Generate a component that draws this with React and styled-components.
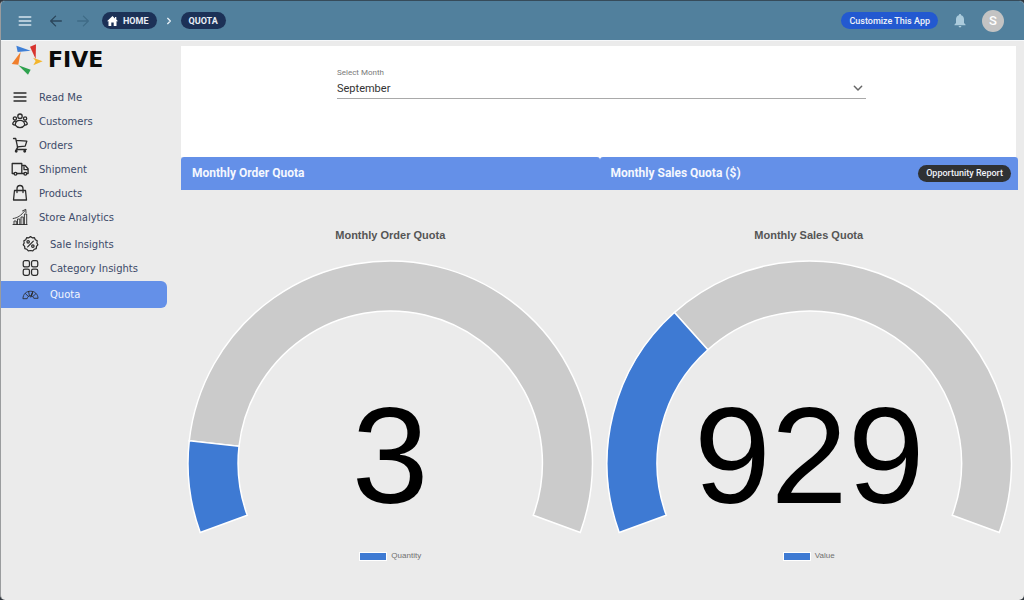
import React, { useState } from "react";
import styled, { createGlobalStyle } from "styled-components";

const GlobalStyle = createGlobalStyle`
  * {
    box-sizing: border-box;
  }

  body {
    margin: 0;
    background: #30363d;
    font-family: Roboto, "Liberation Sans", sans-serif;
  }

  button,
  select {
    font-family: inherit;
  }
`;

const Window = styled.div`
  display: flex;
  flex-direction: column;
  min-height: 100vh;
  border-top: 1px solid #364b5a;
  border-left: 1px solid #9a9c9e;
  border-radius: 5px;
  background: #ebebeb;
  overflow: hidden;
`;

const TopBar = styled.header`
  display: flex;
  align-items: center;
  height: 40px;
  padding: 0 20px 0 16px;
  border-bottom: 1px solid #f6f8fa;
  background: #51809d;
`;

const IconButton = styled.button`
  display: flex;
  padding: 0;
  border: none;
  background: none;
  color: ${(props) => props.$color};
  margin-right: ${(props) => props.$gap || 0}px;
  cursor: pointer;
`;

const Crumbs = styled.nav`
  display: flex;
  align-items: center;
  flex: 1;
  gap: 8px;
  color: #e6eef5;
`;

const Crumb = styled.a`
  display: flex;
  align-items: center;
  gap: 5px;
  height: 17px;
  padding: 0 8px 0 ${(props) => (props.$icon ? 5 : 8)}px;
  border-radius: 9px;
  background: #1c3157;
  color: #e9eef6;
  font-size: 9px;
  font-weight: 700;
  text-decoration: none;
`;

const PillButton = styled.button`
  height: 17px;
  padding: 0 8px;
  border: none;
  border-radius: 9px;
  background: ${(props) => props.$bg};
  color: #f0f3f8;
  font-size: 9px;
  font-weight: 500;
  white-space: nowrap;
  cursor: pointer;
`;

const Actions = styled.div`
  display: flex;
  align-items: center;
  gap: 15px;
`;

const Avatar = styled.button`
  width: 22px;
  height: 22px;
  padding: 0;
  border: none;
  border-radius: 50%;
  background: #c3c3c3;
  color: #fff;
  font-size: 13px;
  font-weight: 500;
`;

const Body = styled.div`
  display: flex;
  flex: 1;
`;

const Sidebar = styled.aside`
  flex: none;
  width: 180px;
  padding: 2px 14px 0 0;
`;

const Brand = styled.div`
  display: flex;
  align-items: center;
  gap: 5px;
  height: 32px;
  margin-bottom: 10px;
  padding-left: 10px;
  color: #0b0b0b;
  font-family: "DejaVu Sans", sans-serif;
  font-size: 22px;
  font-weight: 700;
`;

const MenuList = styled.ul`
  margin: 0;
  padding: ${(props) => (props.$nested ? "3px 0 0" : 0)};
  list-style: none;
`;

const MenuLink = styled.a`
  display: flex;
  align-items: center;
  gap: ${(props) => (props.$nested ? 11 : 10)}px;
  height: ${(props) => (props.$active ? 27 : 24)}px;
  margin-top: ${(props) => (props.$active ? 1 : 0)}px;
  padding-left: ${(props) => (props.$nested ? 21 : 10)}px;
  border-radius: 0 6px 6px 0;
  background: ${(props) => (props.$active ? "#6490e8" : "none")};
  color: ${(props) => (props.$active ? "#f3f6fd" : "#3c4a69")};
  font-family: "DejaVu Sans", sans-serif;
  font-size: 10px;
  text-decoration: none;

  svg {
    flex: none;
    width: ${(props) => (props.$nested ? 17 : 18)}px;
    height: 18px;
    color: #2b2b2b;
  }
`;

const Content = styled.main`
  flex: 1;
  min-width: 0;
  padding: 5px 6px 0 0;
`;

const FilterCard = styled.section`
  height: 111px;
  margin-right: 2px;
  padding: 22px 150px 0 156px;
  background: #fff;
`;

const FieldLabel = styled.label`
  display: block;
  color: #7a7a7a;
  font-size: 8px;
  line-height: 10px;
`;

const SelectBox = styled.div`
  display: grid;
  align-items: center;
  border-bottom: 1px solid #a9a9a9;

  select,
  svg {
    grid-area: 1 / 1;
  }

  svg {
    justify-self: end;
    margin-right: 2px;
    color: #666;
    pointer-events: none;
  }
`;

const Select = styled.select`
  width: 100%;
  height: 20px;
  padding: 0;
  border: none;
  appearance: none;
  background: none;
  color: #333;
  font-size: 11px;
  outline: none;
`;

const Columns = styled.div`
  display: grid;
  grid-template-columns: 1fr 1fr;
  border-radius: 3px 3px 0 0;
  background: ${(props) => props.$bg || "none"};
`;

const PanelHeader = styled.div`
  display: flex;
  align-items: center;
  justify-content: space-between;
  height: 33px;
  padding: 0 7px 1px 11px;
  border-radius: 3px 3px 0 0;
  background: #6490e8;
`;

const PanelTitle = styled.h2`
  margin: 0;
  color: #f4f7fe;
  font-size: 12px;
  font-weight: 700;
`;

const ChartPanel = styled.figure`
  display: flex;
  flex-direction: column;
  align-items: center;
  margin: 0;
  padding-top: 38px;
  font-family: "Liberation Sans", Arial, sans-serif;
`;

const ChartTitle = styled.figcaption`
  margin-bottom: 8px;
  color: #555;
  font-size: 11px;
  font-weight: 700;
  line-height: 14px;
`;

const Dial = styled.svg`
  display: block;
  width: 100%;
  height: auto;
`;

const Legend = styled.div`
  display: flex;
  align-items: center;
  gap: 4px;
  margin-top: 10px;
  color: #707070;
  font-size: 8px;
  line-height: 12px;
`;

const Swatch = styled.span`
  width: 28px;
  height: 9px;
  border: 1px solid #fff;
  background: #3e7ad3;
`;

const Svg = ({ size = 18, width = 1.3, children, ...rest }) => (
  <svg
    width={size}
    height={size}
    viewBox="0 0 18 18"
    fill="none"
    stroke="currentColor"
    strokeWidth={width}
    strokeLinecap="round"
    strokeLinejoin="round"
    aria-hidden="true"
    {...rest}
  >
    {children}
  </svg>
);

const LinesIcon = () => (
  <Svg>
    <path d="M3 5h12M3 9h12M3 13h12" />
  </Svg>
);

const CustomersIcon = () => (
  <Svg width={1.3}>
    <circle cx="9" cy="4.2" r="2.2" />
    <circle cx="3.9" cy="6.4" r="1.6" />
    <circle cx="14.1" cy="6.4" r="1.6" />
    <path d="M4.3 13.2C4.300 10.200 6.200 8.400 9 8.400s4.700 1.800 4.700 4.800c-1.100 1.700-2.700 2.400-4.700 2.400s-3.600-.7-4.700-2.400z" />
    <path d="M5.200 9.300C3.300 8.700 1.900 9.900 1.700 12c.6.700 1.400 1.100 2.500 1.100M12.800 9.300c1.900-.6 3.300.6 3.500 2.700-.6.7-1.400 1.100-2.500 1.100" />
  </Svg>
);

const CartIcon = () => (
  <Svg>
    <path d="M2.500 2.500h2.200l2 9.200M5.100 4.300l10.700.9-1.600 4.900-8 .8M6.700 11.700l-1.500 1.800h10" />
    <circle cx="5.200" cy="15.200" r=".8" fill="currentColor" />
    <circle cx="13.700" cy="15.200" r=".8" fill="currentColor" />
  </Svg>
);

const TruckIcon = () => (
  <Svg>
    <path d="M3 13.500H1.200V3.500h9.600v10H6M10.800 5.500h3.400l2.900 3.300v4.700h-1.300M10.800 13.500h2M13 7v2.600h4" />
    <circle cx="4.500" cy="13.800" r="1.400" />
    <circle cx="14.300" cy="13.800" r="1.400" />
  </Svg>
);

const BagIcon = () => (
  <Svg>
    <path d="M3.500 6.500h11l1 9.500h-13zM6 8.500V5c0-2.200 1.200-3.500 3-3.500s3 1.300 3 3.500v3.500" />
  </Svg>
);

const ChartIcon = () => (
  <Svg width={0.9}>
    <path d="M2 16.500h14M3 16.500v-3.500h2.300v3.500M6.500 16.500v-5.500h2.300v5.500M10 16.500V9h2.300v7.500M13.400 16.500V6h2.300v10.500M2.200 10.500c4.200-.5 8-2.900 11.600-7.800M11.500 2.900l3.300-1.600.2 3.400" />
  </Svg>
);

const PercentIcon = () => (
  <Svg>
    <path d="M9 1.200l1.900 1.200 2.300-.1.900 2.100 2 1.200-.3 2.300 1 2-1.500 1.700-.2 2.300-2.200.7-1.500 1.700L9 15.900l-2.300.4-1.500-1.700-2.200-.7-.2-2.300-1.500-1.700 1-2L2 5.600l2-1.200.9-2.100 2.300.1z" />
    <path d="M6 12l6-6" />
    <circle cx="6.500" cy="6.700" r="1.300" />
    <circle cx="11.500" cy="11.200" r="1.300" />
  </Svg>
);

const GridIcon = () => (
  <Svg>
    <rect x="1.300" y="1.300" width="6.600" height="6.600" rx="1.800" />
    <rect x="10.100" y="1.300" width="6.600" height="6.600" rx="1.800" />
    <rect x="1.300" y="10.100" width="6.600" height="6.600" rx="1.800" />
    <rect x="10.100" y="10.100" width="6.600" height="6.600" rx="1.800" />
  </Svg>
);

const QuotaIcon = () => (
  <Svg width={0.9}>
    <path d="M1 12.500C1.300 7.800 4.600 5 9 5s7.700 2.800 8 7.500h-4.500c-.2-1.500-1.600-2.700-3.500-2.700s-3.300 1.200-3.500 2.700zM3.700 7.600l3 2.900M7 5.200l.8 4.600M11.500 5.400L9.600 10M14.500 7.800l-3 2.800" />
    <path d="M11 6.800l-1.600 4.200" strokeWidth="1.300" />
  </Svg>
);

const LogoMark = () => (
  <svg width="32" height="31" viewBox="32 131 96 93" aria-hidden="true">
    <path d="M48 136l43 15-39 4z" fill="#3f7fd6" />
    <path d="M89 139l18-7-1 44z" fill="#d8342f" />
    <path d="M98 172l29 11-28 12 7-13z" fill="#f3b52c" />
    <path d="M54 195l37 13-8 15z" fill="#2fa24f" />
    <path d="M61 155l-7 38-20-2z" fill="#f07f2c" />
  </svg>
);

const menu = [
  { label: "Read Me", icon: LinesIcon },
  { label: "Customers", icon: CustomersIcon },
  { label: "Orders", icon: CartIcon },
  { label: "Shipment", icon: TruckIcon },
  { label: "Products", icon: BagIcon },
  {
    label: "Store Analytics",
    icon: ChartIcon,
    items: [
      { label: "Sale Insights", icon: PercentIcon },
      { label: "Category Insights", icon: GridIcon },
      { label: "Quota", icon: QuotaIcon, active: true },
    ],
  },
];

const months = [
  "January",
  "February",
  "March",
  "April",
  "May",
  "June",
  "July",
  "August",
  "September",
  "October",
  "November",
  "December",
];

const charts = [
  { title: "Monthly Order Quota", value: 3, share: 0.12, legend: "Quantity" },
  { title: "Monthly Sales Quota", value: 929, share: 0.31, legend: "Value" },
];

const Menu = ({ items, nested }) => (
  <MenuList $nested={nested}>
    {items.map(({ label, icon: Icon, active, items: children }) => (
      <li key={label}>
        <MenuLink
          href="#"
          $nested={nested}
          $active={active}
          aria-current={active ? "page" : undefined}
        >
          <Icon />
          {label}
        </MenuLink>
        {children && <Menu items={children} nested />}
      </li>
    ))}
  </MenuList>
);

// the dial sweeps 220 degrees, from 20 below the left axis to 20 below the right
const CX = 209;
const CY = 213;
const OUTER = 202;
const INNER = 152;

const point = (radius, share) => {
  const angle = ((200 - share * 220) * Math.PI) / 180;
  return `${CX + radius * Math.cos(angle)} ${CY - radius * Math.sin(angle)}`;
};

const arc = (from, to) => {
  const large = (to - from) * 220 > 180 ? 1 : 0;
  return [
    `M${point(OUTER, from)}`,
    `A${OUTER} ${OUTER} 0 ${large} 1 ${point(OUTER, to)}`,
    `L${point(INNER, to)}`,
    `A${INNER} ${INNER} 0 ${large} 0 ${point(INNER, from)}`,
    "Z",
  ].join(" ");
};

const Gauge = ({ title, value, share, legend }) => (
  <ChartPanel>
    <ChartTitle>{title}</ChartTitle>
    <Dial viewBox="0 0 418 290" role="img" aria-label={`${title}: ${value}`}>
      <g stroke="#fff" strokeWidth="1.5">
        <path d={arc(share, 1)} fill="#cbcbcb" />
        <path d={arc(0, share)} fill="#3e7ad3" />
      </g>
      <text x={CX} y="253" fontSize="138" textAnchor="middle">
        {value}
      </text>
    </Dial>
    <Legend>
      <Swatch />
      {legend}
    </Legend>
  </ChartPanel>
);

const App = () => {
  const [month, setMonth] = useState("September");

  return (
    <>
      <GlobalStyle />
      <Window>
        <TopBar>
          <IconButton $color="#d5e3ee" $gap={15} aria-label="Menu">
            <Svg size={16} width={1.6}>
              <path d="M2.500 4.500h13M2.500 9h13M2.500 13.500h13" />
            </Svg>
          </IconButton>
          <IconButton $color="#2b465c" $gap={11} aria-label="Back">
            <Svg size={16} width={1.5}>
              <path d="M15 9H3M8.500 3.500L3 9l5.500 5.500" />
            </Svg>
          </IconButton>
          <IconButton $color="#3f6b87" $gap={11} aria-label="Forward">
            <Svg size={16} width={1.5}>
              <path d="M3 9h12M9.500 3.500L15 9l-5.500 5.500" />
            </Svg>
          </IconButton>
          <Crumbs aria-label="Breadcrumb">
            <Crumb href="#" $icon>
              <svg width="11" height="10" viewBox="0 0 11 10" fill="#fff" aria-hidden="true">
                <path d="M5.500 0L0 5.200h1.500V10h2.800V6.500h2.400V10h2.800V5.200H11L9.300 3.600V1H8v1.400z" />
              </svg>
              HOME
            </Crumb>
            <Svg size={8} width={3}>
              <path d="M6 3l6 6-6 6" />
            </Svg>
            <Crumb href="#">QUOTA</Crumb>
          </Crumbs>
          <Actions>
            <PillButton $bg="#2359d0">Customize This App</PillButton>
            <IconButton $color="#abcbdc" aria-label="Notifications">
              <svg width="14" height="14" viewBox="0 0 14 14" fill="currentColor" aria-hidden="true">
                <path d="M7 0c-.7 0-1.100.5-1.100 1.200C4 1.700 3 3.300 3 5.300v3.700L1.500 10.500v.8h11v-.8L11 9V5.300c0-2-1-3.600-2.900-4.100C8.100.5 7.700 0 7 0zM5.600 12a1.400 1.400 0 0 0 2.800 0z" />
              </svg>
            </IconButton>
            <Avatar aria-label="Account">S</Avatar>
          </Actions>
        </TopBar>
        <Body>
          <Sidebar>
            <Brand>
              <LogoMark />
              FIVE
            </Brand>
            <Menu items={menu} />
          </Sidebar>
          <Content>
            <FilterCard>
              <FieldLabel htmlFor="month">Select Month</FieldLabel>
              <SelectBox>
                <Select
                  id="month"
                  value={month}
                  onChange={(e) => setMonth(e.target.value)}
                >
                  {months.map((name) => (
                    <option key={name}>{name}</option>
                  ))}
                </Select>
                <Svg size={12} width={2.2}>
                  <path d="M3.500 6.500L9 12l5.500-5.500" />
                </Svg>
              </SelectBox>
            </FilterCard>
            <Columns $bg="#fff">
              <PanelHeader>
                <PanelTitle>Monthly Order Quota</PanelTitle>
              </PanelHeader>
              <PanelHeader>
                <PanelTitle>Monthly Sales Quota ($)</PanelTitle>
                <PillButton $bg="#2f3133">Opportunity Report</PillButton>
              </PanelHeader>
            </Columns>
            <Columns>
              {charts.map((chart) => (
                <Gauge key={chart.title} {...chart} />
              ))}
            </Columns>
          </Content>
        </Body>
      </Window>
    </>
  );
};

export default App;
